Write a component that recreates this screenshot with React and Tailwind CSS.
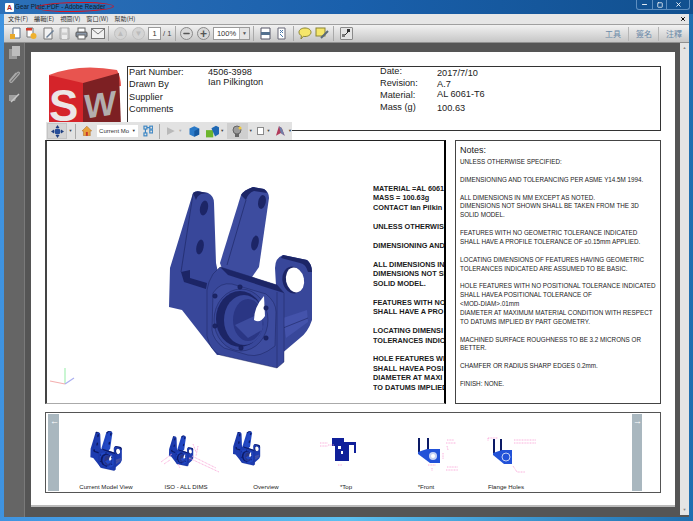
import { Minus, Square, X } from "lucide-react";

const noteLines = [
  "UNLESS OTHERWISE SPECIFIED:", "",
  "DIMENSIONING AND TOLERANCING PER ASME Y14.5M 1994.", "",
  "ALL DIMENSIONS IN MM EXCEPT AS NOTED.",
  "DIMENSIONS NOT SHOWN SHALL BE TAKEN FROM THE 3D",
  "SOLID MODEL.", "",
  "FEATURES WITH NO GEOMETRIC TOLERANCE INDICATED",
  "SHALL HAVE A PROFILE TOLERANCE OF  ±0.15mm APPLIED.", "",
  "LOCATING DIMENSIONS OF FEATURES HAVING GEOMETRIC",
  "TOLERANCES INDICATED ARE ASSUMED TO BE BASIC.", "",
  "HOLE FEATURES WITH NO POSITIONAL TOLERANCE INDICATED",
  "SHALL HAVEA POSITIONAL TOLERANCE OF",
  "<MOD-DIAM>.01mm",
  "DIAMETER AT MAXIMUM MATERIAL CONDITION WITH RESPECT",
  "TO DATUMS IMPLIED BY PART GEOMETRY.", "",
  "MACHINED SURFACE ROUGHNESS TO BE 3.2 MICRONS OR",
  "BETTER.", "",
  "CHAMFER OR RADIUS SHARP EDGES 0.2mm.", "",
  "FINISH:  NONE.",
];

// the source drawing cuts these off at the frame edge
const modelLines = [
  "MATERIAL =AL 6061", "MASS =  100.63g", "CONTACT  Ian Pilkin", "",
  "UNLESS OTHERWISE", "",
  "DIMENSIONING AND", "",
  "ALL DIMENSIONS IN", "DIMENSIONS NOT SH", "SOLID MODEL.", "",
  "FEATURES WITH NO", "SHALL HAVE A PRO", "",
  "LOCATING DIMENSI", "TOLERANCES INDIC", "",
  "HOLE FEATURES WI", "SHALL HAVEA POSI", "DIAMETER AT MAXI", "TO DATUMS IMPLIED",
];

const thumbs = ["Current Model View", "ISO - ALL DIMS", "Overview", "*Top", "*Front", "Flange Holes"];

function Part({ face = "#3d4c9f", side = "#38479a", dark = "#1c2566", line = "#151c52" }) {
  return (
    <g strokeLinejoin="round">
      {/* left arm and body side */}
      <path d="M30 108 L53 33 Q56 30 62 32 L68 33 Q74 36 74 43 L76 103 L80 122 L80 195 L77 195 L67 182 L42 150 L29 147 Z" fill={side} />
      <path d="M53 33 Q56 30 62 32 L68 33 L61 34 Q57 36 56 40 Z" fill={dark} />
      <path d="M53 34 L41 112" stroke={line} strokeWidth=".5" fill="none" />
      <path d="M41 112 L50 110 L50 118 L67 123 L66 129 L44 122 Z" fill={dark} />
      <ellipse cx="64" cy="48" rx="4" ry="7.500" fill={dark} transform="rotate(12 64 48)" />
      <ellipse cx="60" cy="87" rx="3.600" ry="7.500" fill={dark} transform="rotate(12 60 87)" />
      {/* right lug */}
      <path d="M135 108 Q135 98 143 95 L167 100 Q172 104 172 112 L172 160 Q168 172 160 178 L140 195 Z" fill={side} />
      <path d="M143 95 L167 100 Q172 104 172 112 L168 112 Q166 104 160 103 L141 98 Z" fill={dark} />
      <ellipse cx="153" cy="120" rx="10.500" ry="13.500" fill={dark} transform="rotate(-12 153 120)" />
      <ellipse cx="155" cy="120" rx="9" ry="12.500" fill="#fff" transform="rotate(-12 155 120)" />
      <path d="M143 158 L167 150 L168 162 L146 178 Z" fill="#4453ab" />
      <path d="M143 168 L168 158" stroke={line} strokeWidth=".5" />
      {/* right arm */}
      <path d="M80 103 L101 35 Q104 30 113 27 L124 29 Q129 32 129 38 L119 107 L110 120 L84 115 Z" fill={face} />
      <path d="M101 35 Q104 30 113 27 L124 29 Q127 31 127 33 L114 31 Q108 33 106 40 Z" fill={dark} />
      <path d="M106 40 L87 105" stroke={line} strokeWidth=".5" fill="none" />
      <ellipse cx="122" cy="42" rx="3.800" ry="7" fill={dark} transform="rotate(12 122 42)" />
      <ellipse cx="115" cy="83" rx="3.600" ry="7.500" fill={dark} transform="rotate(12 115 83)" />
      {/* flange */}
      <path d="M67 130 Q68 122 73 114 L80 107 L137 125 L144 133 L144 202 L137 208 L80 195 Q70 190 67 176 Z" fill={side} stroke={line} strokeWidth=".4" />
      <path d="M80 107 L137 125 L144 133 L128 128 L88 115 Z" fill={dark} />
      <path d="M137 132 L137 208" stroke={line} strokeWidth=".4" />
      <path d="M73 133 Q80 122 92 124 L126 134 Q136 142 136 152 L135 186 Q120 198 108 195 L84 188 Q73 180 72 170 Z" fill={face} stroke={line} strokeWidth=".4" />
      <ellipse cx="101" cy="160" rx="27" ry="31" fill={side} stroke={line} strokeWidth=".4" />
      <ellipse cx="100" cy="159" rx="24" ry="28" fill={dark} />
      <ellipse cx="104" cy="160" rx="20" ry="25" fill={side} />
      <ellipse cx="108" cy="160" rx="15" ry="21" fill="#2a3684" />
      <path d="M95 165 L123 152 L122 170 L108 178 Z" fill={face} />
      <path d="M124 136 Q114 147 114 160 Q120 164 125 156 Z" fill="#fff" />
      {[[100, 127], [75, 136], [126, 148], [75, 166], [126, 178], [101, 188]].map(([x, y]) => (
        <circle key={x + "" + y} cx={x} cy={y} r="2.300" fill={dark} stroke={line} strokeWidth=".4" />
      ))}
    </g>
  );
}

function ModelDrawing() {
  return (
    <svg width="326" height="262" viewBox="0 0 326 262" className="shrink-0">
      <g transform="translate(93 19)">
        <Part />
      </g>
      <g fill="none" strokeWidth="1.200">
        <path d="M18 243 L18 227" stroke="#a7f0b5" />
        <path d="M18 243 L3 240" stroke="#f3b0b0" />
        <path d="M18 243 L27 237" stroke="#a9aef0" />
      </g>
    </svg>
  );
}

function Pink({ d }) {
  return <path d={d} fill="none" stroke="#f9a6d8" strokeWidth=".9" strokeDasharray="1 .6" />;
}

function Thumb({ index }) {
  const bright = { face: "#2248c4", side: "#1d3cb0", dark: "#0c1a66", line: "#0a1450" };
  return (
    <svg width="80" height="64" viewBox="0 0 80 64" className="shrink-0">
      {index === 0 && <g transform="translate(18 11) scale(.22)"><Part {...bright} /></g>}
      {index === 1 && (
        <g>
          <g transform="translate(18 17) scale(.17)"><Part {...bright} /></g>
          <Pink d="M15 48 L26 40 M18 50 L24 46 M43 44 L73 58 M46 42 L70 54 M47 30 L50 38 M52 32 L50 42 M32 50 L34 54" />
        </g>
      )}
      {index === 2 && <g transform="translate(1.500 12) scale(.19)"><Part {...bright} /></g>}
      {index === 3 && (
        <g>
          <path d="M26 24 L38 24 L38 28 L50 28 L50 39 L48 39 L48 31 L43 31 L43 47 L29 47 L29 32 L26 32 Z" fill="#10209a" />
          <rect x="32" y="32" width="3" height="3" fill="#fff" />
          <rect x="35" y="37" width="2" height="3" fill="#fff" />
          <Pink d="M14 29 L22 29 M14 32 L22 32 M22 31 L28 31 M32 51 L36 51" />
        </g>
      )}
      {index === 4 && (
        <g transform="translate(14 -1)">
          <rect x="18" y="25" width="2" height="14" fill="#0c1a66" />
          <rect x="27" y="25" width="2" height="14" fill="#0c1a66" />
          <path d="M18 39 L27 36 L40 36 L40 50 L30 50 L18 41 Z" fill="#2252d8" />
          <circle cx="33" cy="43" r="4" fill="#c6d2f5" />
          <circle cx="33" cy="43" r="2" fill="#fff" />
          <Pink d="M47 27 L54 27 M46 30 L56 30 M47 33 L48 37 M47 54 L58 54 M46 57 L58 57 M43 40 L43 46 M28 52 L36 52 M32 55 L32 58" />
        </g>
      )}
      {index === 5 && (
        <g transform="translate(13 0)">
          <rect x="14" y="25" width="2" height="14" fill="#0c1a66" />
          <rect x="21" y="25" width="2" height="14" fill="#0c1a66" />
          <path d="M14 39 L23 36 L33 36 L33 50 L25 50 L14 41 Z" fill="#2252d8" />
          <circle cx="27" cy="43" r="4" fill="none" stroke="#c6d2f5" />
          <Pink d="M9 24 L19 24 M9 24 L9 27 M35 26 L57 26 M35 29 L57 29 M34 52 L38 58 L46 58" />
        </g>
      )}
    </svg>
  );
}

function Logo() {
  return (
    <svg width="75" height="58" viewBox="0 0 75 58" className="shrink-0" fontFamily="Liberation Sans, sans-serif" fontWeight="700">
      <path d="M2 9 Q32 -3 70 4 Q74 12 74 20 L36 23 Z" fill="#e8544f" />
      <path d="M2 9 L36 17 L36 60 L2 60 Z" fill="#d5242a" />
      <path d="M36 17 L72 7 L74 60 L36 60 Z" fill="#7d2023" />
      <text x="2" y="55" fontSize="44" fill="#ece6e6">S</text>
      <text x="37" y="52" fontSize="34" fill="#b3adad" transform="skewY(-8) translate(0 6)">W</text>
    </svg>
  );
}

function IconBtn({ children, className = "w-[16.5px]" }) {
  return <div className={"flex h-full shrink-0 items-center justify-center " + className}>{children}</div>;
}

function Sep({ className = "mx-[2px]" }) {
  return <div className={"h-[15px] w-px shrink-0 bg-[#a9a9a9] " + className} />;
}

function RoundBtn({ dim, children }) {
  return (
    <div className={"flex h-[13px] w-[13px] items-center justify-center rounded-full border " + (dim ? "border-[#c0c0c0] bg-[#d4d4d4] text-[#bbbbbb]" : "border-[#8a8a8a] bg-[#d8d8d8] text-[#555]")}>
      {children}
    </div>
  );
}

function MainToolbar() {
  return (
    <div className="flex h-[18px] shrink-0 items-center border-b border-[#8f8f8f] bg-gradient-to-b from-[#f2f2f2] to-[#c6c6c6] pl-[3px] text-[#555]">
      <IconBtn>
        <svg width="13" height="13" viewBox="0 0 13 13"><path d="M4 1h7v10H4z" fill="#fff" stroke="#5f6f85" /><path d="M1 7l5 0v5H1z" fill="#e8a92c" /></svg>
      </IconBtn>
      <IconBtn>
        <svg width="13" height="13" viewBox="0 0 13 13"><path d="M2 1h6v9H2z" fill="#fff" stroke="#777" /><circle cx="8.500" cy="9" r="3" fill="#efb12f" /><rect x="1" y="1" width="6" height="2.500" fill="#d13b2a" /></svg>
      </IconBtn>
      <IconBtn>
        <svg width="13" height="13" viewBox="0 0 13 13"><path d="M2 1h8v11H2z" fill="#f2f2f2" stroke="#777" /><path d="M4 10l7-7 1 1-7 7z" fill="#6b7f96" /></svg>
      </IconBtn>
      <IconBtn>
        <svg width="13" height="13" viewBox="0 0 13 13"><path d="M2 1h9v11H2z" fill="#cfcfcf" stroke="#a8a8a8" /><rect x="4" y="1.500" width="5" height="4" fill="#ececec" /><rect x="4" y="8" width="5" height="4" fill="#ececec" /></svg>
      </IconBtn>
      <IconBtn>
        <svg width="13" height="13" viewBox="0 0 13 13"><rect x="1" y="5" width="11" height="5" rx="1" fill="#8a97a8" stroke="#555" /><rect x="3" y="1" width="7" height="4" fill="#fff" stroke="#666" /><rect x="3" y="8" width="7" height="4" fill="#fff" stroke="#666" /></svg>
      </IconBtn>
      <IconBtn>
        <svg width="14" height="11" viewBox="0 0 14 11"><rect x=".5" y=".5" width="13" height="10" fill="#f1f1f1" stroke="#777" /><path d="M1 1l6 5 6-5" fill="none" stroke="#777" /></svg>
      </IconBtn>
      <Sep className="ml-[2px] mr-[5px]" />
      <div className="flex w-[31px] shrink-0 justify-between">
        <RoundBtn dim><span className="text-[8px] leading-none">▲</span></RoundBtn>
        <RoundBtn dim><span className="text-[8px] leading-none">▼</span></RoundBtn>
      </div>
      <div className="ml-[3px] flex h-[13px] w-[13px] shrink-0 items-center justify-center border border-[#9a9a9a] bg-white text-[7.500px] text-[#333]">1</div>
      <span className="ml-[2px] w-[12px] shrink-0 text-[7.500px] text-[#444]">/ 1</span>
      <Sep className="mr-[4px]" />
      <div className="flex w-[30px] shrink-0 justify-between">
        <RoundBtn><Minus size={9} strokeWidth={3.5} /></RoundBtn>
        <RoundBtn><span className="text-[12px] font-bold leading-none">+</span></RoundBtn>
      </div>
      <div className="ml-[3px] flex h-[13px] w-[37px] shrink-0 border border-[#9a9a9a] bg-white">
        <span className="flex flex-1 items-center justify-center text-[7.500px] text-[#333]">100%</span>
        <span className="flex w-[10px] items-center justify-center border-l border-[#b5b5b5] bg-[#e4e4e4] text-[5px]">▼</span>
      </div>
      <Sep className="mx-[3px]" />
      <IconBtn>
        <svg width="13" height="13" viewBox="0 0 13 13"><path d="M2 1h9v11H2z" fill="#fff" stroke="#556" /><rect x="2" y="5" width="9" height="3" fill="#54708e" /></svg>
      </IconBtn>
      <IconBtn>
        <svg width="13" height="13" viewBox="0 0 13 13"><path d="M3 1h7v11H3z" fill="#fff" stroke="#667" /><path d="M5 3l3 3M8 3L5 6M5 7l3 3" stroke="#4b79ad" /></svg>
      </IconBtn>
      <Sep className="mx-[3px]" />
      <IconBtn>
        <svg width="14" height="13" viewBox="0 0 14 13"><path d="M7 1c3.500 0 6 1.800 6 4.200S10.500 9.500 7 9.500c-.6 0-1.200 0-1.700-.2L3 12l.4-3.300C2 8 1 6.800 1 5.200 1 2.800 3.500 1 7 1z" fill="#f5e66a" stroke="#8a8434" /></svg>
      </IconBtn>
      <IconBtn>
        <svg width="14" height="13" viewBox="0 0 14 13"><rect x="1" y="1" width="9" height="8" fill="#f5e66a" stroke="#8a8434" /><path d="M6 11l7-7" stroke="#5a6a78" strokeWidth="2" /></svg>
      </IconBtn>
      <Sep className="ml-[3px] mr-[6px]" />
      <div className="flex h-[13px] w-[13px] shrink-0 items-center justify-center rounded-[1px] border border-[#8a8a8a] bg-[#e4e4e4]">
        <svg width="9" height="9" viewBox="0 0 9 9"><rect x="5" y="0" width="3" height="3" fill="#333" /><rect x="0" y="5" width="3" height="3" fill="#777" /><path d="M3 6l3-3" stroke="#333" /></svg>
      </div>
      <div className="ml-auto flex items-center font-['Noto_Sans_CJK_TC',sans-serif] text-[8px] leading-[12px] text-[#6b89a8]">
        <span className="pr-[7px]">工具</span>
        <span className="border-l border-[#b5b5b5] py-[1px] pl-[7px] pr-[6px]">簽名</span>
        <span className="border-l border-[#b5b5b5] py-[1px] pl-[7px] pr-[7px]">注釋</span>
      </div>
    </div>
  );
}

function Toolbar3D() {
  return (
    <div className="absolute left-[15px] top-[70px] flex h-[18px] w-[246px] items-center bg-[#e2e2e2] pl-[1px] text-[#444]">
      <div className="flex h-[16px] w-[21px] items-center justify-center border border-[#c4c4c4] bg-[#d4d4d4]">
        <svg width="13" height="13" viewBox="0 0 13 13"><path d="M6.500 0l2 3h-4zM6.500 13l-2-3h4zM0 6.500l3-2v4zM13 6.500l-3 2v-4z" fill="#1f3f7f" /><circle cx="6.500" cy="6.500" r="3" fill="#264e9a" /></svg>
      </div>
      <span className="ml-[1px] text-[4px]">▼</span>
      <Sep className="mx-[3px]" />
      <svg className="ml-[3px]" width="10" height="10" viewBox="0 0 10 10"><path d="M5 0l5 5H8.500v5h-7V5H0z" fill="#e9a13b" stroke="#a8631b" strokeWidth=".5" /><rect x="4" y="6" width="2" height="4" fill="#c9392b" /></svg>
      <div className="ml-[5px] flex h-[12px] w-[42px] items-center justify-between bg-white px-[2px] text-[6px] text-[#333]">
        <span className="whitespace-nowrap">Current Mo</span>
        <span className="text-[4px]">▼</span>
      </div>
      <svg className="ml-[5px]" width="11" height="12" viewBox="0 0 11 12" fill="none" stroke="#3c86c4" strokeWidth="1.200"><rect x="1" y="1" width="3" height="3" /><rect x="7" y="1" width="3" height="3" /><rect x="1" y="8" width="3" height="3" /><rect x="7" y="5" width="3" height="3" /><path d="M4 2.500h3M2.500 4v4" /></svg>
      <Sep className="mx-[6px]" />
      <svg width="10" height="10" viewBox="0 0 10 10"><path d="M1 1l8 4-8 4z" fill="#b9b9b9" /></svg>
      <span className="ml-[2px] text-[4px] text-[#aaa]">▼</span>
      <svg className="ml-[7px]" width="11" height="11" viewBox="0 0 11 11"><path d="M5.500 0l5 2.500v6l-5 2.500-5-2.500v-6z" fill="#2a79c7" /><path d="M5.500 5l5-2.500v6l-5 2.500z" fill="#1558a0" /></svg>
      <svg className="ml-[6px]" width="14" height="13" viewBox="0 0 15 13"><rect x="0" y="5" width="8" height="8" fill="#6cb52c" /><path d="M6 3l5-3 4 2v7l-5 3z" fill="#1f68b4" /></svg>
      <span className="ml-[1px] text-[4px]">▼</span>
      <div className="ml-[3px] flex h-[16px] w-[21px] items-center justify-center bg-[#cfcfcf]">
        <svg width="13" height="13" viewBox="0 0 13 13"><circle cx="6" cy="5" r="4" fill="#9c9c9c" stroke="#666" /><rect x="4" y="9" width="4" height="3" fill="#666" /><circle cx="9" cy="3" r="1.500" fill="#f0c93a" /></svg>
      </div>
      <span className="ml-[1px] text-[4px]">▼</span>
      <div className="ml-[4px] h-[8px] w-[8px] border border-[#8a8a8a] bg-white" />
      <span className="ml-[2px] text-[4px]">▼</span>
      <svg className="ml-[5px]" width="11" height="12" viewBox="0 0 11 12"><path d="M1 11L4 1l3 2 3 8-4-3z" fill="#b23a5a" /><path d="M4 1l3 2 3 8-4-3z" fill="#6f7fa8" /></svg>
      <span className="ml-[2px] text-[4px]">▼</span>
    </div>
  );
}

function Sidebar() {
  return (
    <div className="flex w-[21px] shrink-0 flex-col items-center gap-[10px] border-r border-[#7a7a7a] bg-[#656565] pt-[3px]">
      <svg width="13" height="14" viewBox="0 0 13 14"><rect x="1" y="3" width="8" height="10" fill="#9a9a9a" /><rect x="4" y="0" width="8" height="10" fill="#bdbdbd" /></svg>
      <svg width="12" height="13" viewBox="0 0 12 13" fill="none" stroke="#a8a8a8" strokeWidth="1.200"><path d="M2 11L9 3c2-2 3 0 2 1l-7 8c-1 1-3 0-2-2l6-7" /></svg>
      <svg width="13" height="10" viewBox="0 0 13 10"><path d="M1 2h8L7 8H1z" fill="#a0a0a0" /><path d="M3 9l8-8" stroke="#c8c8c8" strokeWidth="1.500" /></svg>
    </div>
  );
}

export default function App() {
  return (
    <div className="relative flex h-[521px] w-[693px] flex-col overflow-hidden bg-gradient-to-r from-[#3f93e0] via-[#5cc0f0] to-[#1f6fb0] font-['Liberation_Sans',sans-serif]">
      {/* Title bar */}
      <div className="flex h-[14px] shrink-0 items-center bg-gradient-to-r from-[#2c70b8] via-[#1a60ac] to-[#11508f] pl-[5px]">
        <div className="flex h-[9px] w-[9px] items-center justify-center rounded-[1px] bg-[#fff] text-[7px] font-bold leading-none text-[#b02020]">A</div>
        <span className="ml-[1px] text-[6.300px] text-[#0c1a2a]">Gear Plate.PDF - Adobe Reader</span>
        <div className="ml-auto mr-[3px] flex h-[10px] self-start rounded-b-[3px] border border-t-0 border-[#5f8fc0] text-white">
          <span className="flex w-[15px] items-center justify-center"><Minus size={7} strokeWidth={3} /></span>
          <span className="flex w-[14px] items-center justify-center border-l border-[#5f8fc0]"><Square size={6} strokeWidth={3} /></span>
          <span className="flex w-[23px] items-center justify-center border-l border-[#5f8fc0]"><X size={7} strokeWidth={3} /></span>
        </div>
      </div>
      {/* Red marker drawn over the title */}
      <div className="absolute left-[36px] top-[2px] h-[10px] w-[78px] -rotate-1 rounded-[50%] border-[1.500px] border-[#d8121e]" />

      <div className="flex min-h-0 flex-1 flex-col px-[4px] pb-[4px]">
        {/* Menu */}
        <div className="flex h-[11px] shrink-0 items-center gap-[6px] border-b border-[#a0a0a0] bg-[#e6e6e6] pl-[4px] pr-[3px] font-['Noto_Sans_CJK_TC',sans-serif] text-[6.200px] text-[#333]">
          <span>文件(F)</span>
          <span>編輯(E)</span>
          <span>視圖(V)</span>
          <span>窗口(W)</span>
          <span>幫助(H)</span>
          <X className="ml-auto text-black" size={6} strokeWidth={4} />
        </div>
        <MainToolbar />

        {/* Document area */}
        <div className="flex min-h-0 flex-1 bg-[#555555]">
          <Sidebar />
          <div className="flex flex-1 items-start pl-[6px] pt-[9px]">
            <div className="relative flex h-[455px] w-[644px] shrink-0 flex-col border-b-2 border-[#bbbbbb] bg-white px-[14px] pt-[14px] text-[#111]">
              {/* Header */}
              <div className="flex h-[65px] shrink-0">
                <div className="w-[82px] shrink-0 pl-[2px]">
                  <Logo />
                </div>
                <div className="flex flex-1 border border-[#333] pl-[1px] text-[9.200px] text-[#222]">
                  <div className="-mt-[1px] flex w-[79px] shrink-0 flex-col leading-[12.400px]">
                    <span>Part Number:</span>
                    <span>Drawn By</span>
                    <span>Supplier</span>
                    <span>Comments</span>
                  </div>
                  <div className="flex w-[172px] shrink-0 flex-col leading-[10px]">
                    <span>4506-3998</span>
                    <span>Ian Pilkington</span>
                  </div>
                  <div className="-mt-[2px] flex w-[57px] shrink-0 flex-col leading-[12px]">
                    <span>Date:</span>
                    <span>Revision:</span>
                    <span>Material:</span>
                    <span>Mass (g)</span>
                  </div>
                  <div className="flex flex-col pt-[1px] leading-[10.500px]">
                    <span>2017/7/10</span>
                    <span>A.7</span>
                    <span>AL 6061-T6</span>
                    <span className="mt-[3px]">100.63</span>
                  </div>
                </div>
              </div>

              {/* Model and notes */}
              <div className="mt-[9px] flex h-[264px] shrink-0 gap-[9px]">
                <div className="flex w-[401px] shrink-0 overflow-hidden border-x-2 border-y border-b-[#aaaaaa] border-l-[#444] border-r-black border-t-[#222]">
                  <ModelDrawing />
                  <div className="min-w-0 flex-1 overflow-hidden whitespace-nowrap pt-[43px] text-[7.300px] font-bold leading-[9.480px] text-[#1a1a1a]">
                    {modelLines.map((l, i) => <div key={i} className="h-[9.480px]">{l}</div>)}
                  </div>
                </div>
                <div className="flex-1 overflow-hidden border border-[#444] pl-[4px] pt-[4px] text-[#222]">
                  <div className="text-[9px] leading-[11px]">Notes:</div>
                  <div className="whitespace-nowrap pt-[2px] text-[6.300px]">
                    {noteLines.map((l, i) => <div key={i} className="h-[8.880px] leading-[8.880px]">{l}</div>)}
                  </div>
                </div>
              </div>

              {/* Thumbnail strip */}
              <div className="mt-[8px] flex h-[81px] shrink-0 border border-[#555] py-[1px] pl-[2px] pr-[18px]">
                <div className="w-[11px] shrink-0 bg-[#a9b7bf] pl-[2px] pt-[2px] text-[9px] font-bold leading-[10px] text-white">←</div>
                <div className="flex min-w-0 flex-1 pl-[7px]">
                  {thumbs.map((t, i) => (
                    <div key={t} className="flex w-[80px] shrink-0 flex-col items-center">
                      <Thumb index={i} />
                      <span className="mt-[5px] whitespace-nowrap text-[6.100px] leading-[8px] text-[#222]">{t}</span>
                    </div>
                  ))}
                </div>
                <div className="w-[10px] shrink-0 bg-[#a9b7bf] pl-[1px] pt-[2px] text-[9px] font-bold leading-[10px] text-white">→</div>
              </div>

              <Toolbar3D />
            </div>

            {/* Scrollbar */}
            <div className="-mt-[9px] ml-[5px] flex h-[472px] w-[9px] shrink-0 flex-col items-center justify-between bg-[#e4e4e4] py-[2px] text-[4px] text-[#888]">
              <span>▲</span>
              <span>▼</span>
            </div>
          </div>
        </div>
      </div>
    </div>
  );
}
